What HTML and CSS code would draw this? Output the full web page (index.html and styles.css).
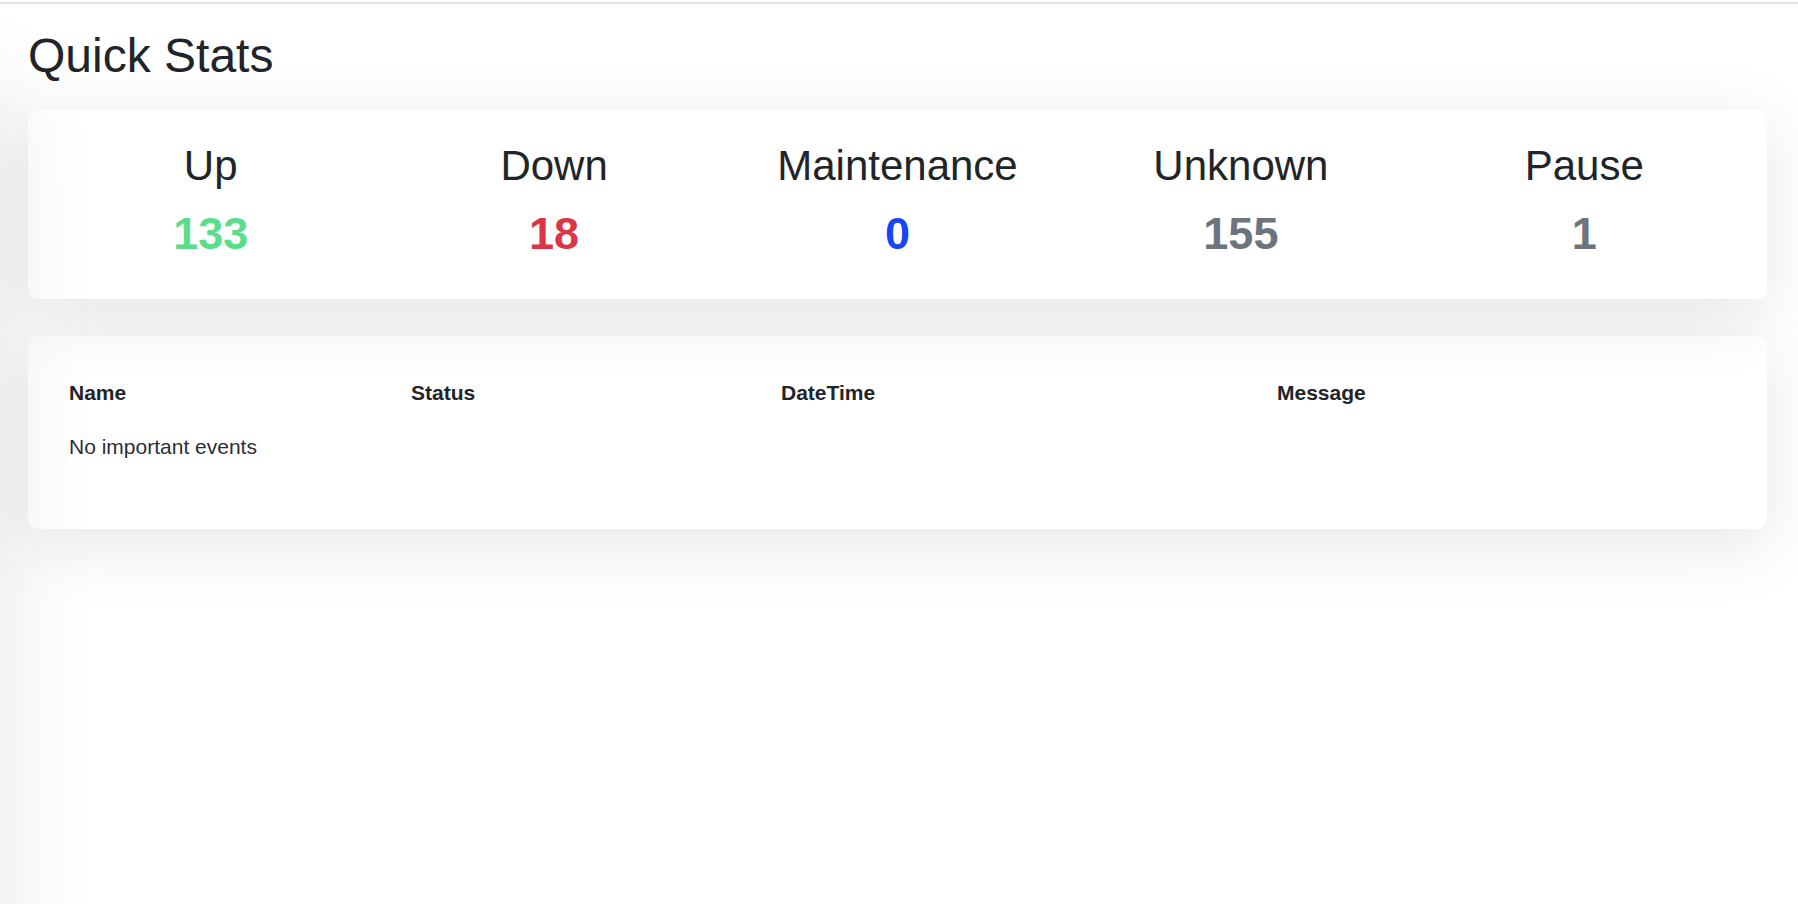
FILE: index.html
```html
<!DOCTYPE html>
<html lang="en">
<head>
<meta charset="utf-8">
<title>Quick Stats</title>
<link rel="stylesheet" href="styles.css">
</head>
<body>
<div class="side-shadow"></div>
<div class="topline"></div>
<main class="page">
  <h1 class="title">Quick Stats</h1>
  <section class="card stats-card">
    <div class="stat">
      <h3 class="stat-label">Up</h3>
      <span class="num num-up">133</span>
    </div>
    <div class="stat">
      <h3 class="stat-label">Down</h3>
      <span class="num num-down">18</span>
    </div>
    <div class="stat">
      <h3 class="stat-label">Maintenance</h3>
      <span class="num num-maint">0</span>
    </div>
    <div class="stat">
      <h3 class="stat-label">Unknown</h3>
      <span class="num num-gray">155</span>
    </div>
    <div class="stat">
      <h3 class="stat-label">Pause</h3>
      <span class="num num-gray">1</span>
    </div>
  </section>
  <section class="card events-card">
    <table class="events">
      <thead>
        <tr>
          <th class="c-name">Name</th>
          <th class="c-status">Status</th>
          <th class="c-date">DateTime</th>
          <th class="c-msg">Message</th>
        </tr>
      </thead>
      <tbody>
        <tr>
          <td colspan="4">No important events</td>
        </tr>
      </tbody>
    </table>
  </section>
</main>
</body>
</html>
```
FILE: styles.css
```css
html, body {
  margin: 0;
  padding: 0;
  background: #ffffff;
}

body {
  font-family: "Liberation Sans", Arial, sans-serif;
  color: #212529;
  min-height: 904px;
  overflow: hidden;
}

.side-shadow {
  position: fixed;
  z-index: 5;
  left: -300px;
  top: 70px;
  width: 300px;
  height: 2000px;
  background: #ffffff;
  border-radius: 10px;
  box-shadow: 0 15px 100px rgba(0, 0, 0, 0.1);
  pointer-events: none;
}

.topline {
  height: 2px;
  margin-top: 2px;
  background: #e3e3e3;
}

.page {
  padding: 24px 31px 0 28px;
  display: flex;
  flex-direction: column;
}

.title {
  margin: 0;
  font-size: 48px;
  font-weight: 400;
  line-height: 56px;
  color: #212529;
}

.card {
  position: relative;
  background: #ffffff;
  border-radius: 10px;
  box-shadow: 0 15px 70px rgba(0, 0, 0, 0.1);
}

.stats-card {
  z-index: 2;
  margin-top: 26px;
  padding: 32px 11px 40px;
  display: grid;
  grid-template-columns: repeat(5, 1fr);
  height: 189px;
  box-sizing: border-box;
}

.stat {
  display: flex;
  flex-direction: column;
  align-items: center;
}

.stat-label {
  margin: 0 0 19px;
  font-size: 42px;
  font-weight: 400;
  line-height: 48px;
  color: #212529;
}

.num {
  font-size: 45px;
  font-weight: 700;
  line-height: 50px;
}

.num-up { color: #5cdd8b; }
.num-down { color: #dc3545; }
.num-maint { color: #1747f5; }
.num-gray { color: #6c757d; }

.events-card {
  z-index: 1;
  margin-top: 37px;
  height: 193px;
  box-sizing: border-box;
  padding: 44px 41px 0;
}

.events {
  width: 100%;
  border-collapse: collapse;
  table-layout: fixed;
  font-size: 21px;
}

.events th {
  text-align: left;
  font-weight: 700;
  line-height: 25px;
  padding: 0 0 29px;
  color: #212529;
}

.events td {
  padding: 0;
  line-height: 25px;
  color: #2b2f33;
}

.c-name { width: 342px; }
.c-status { width: 370px; }
.c-date { width: 496px; }
```
